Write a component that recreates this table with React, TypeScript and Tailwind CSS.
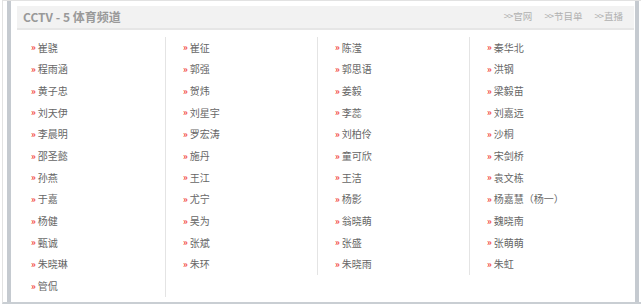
const columns: string[][] = [
  ['崔骁', '程雨涵', '黄子忠', '刘天伊', '李晨明', '邵圣懿', '孙燕', '于嘉', '杨健', '甄诚', '朱晓琳', '管侃'],
  ['崔征', '郭强', '贺炜', '刘星宇', '罗宏涛', '施丹', '王江', '尤宁', '吴为', '张斌', '朱环'],
  ['陈滢', '郭思语', '姜毅', '李蕊', '刘柏伶', '童可欣', '王洁', '杨影', '翁晓萌', '张盛', '朱晓雨'],
  ['秦华北', '洪钢', '梁毅苗', '刘嘉远', '沙桐', '宋剑桥', '袁文栋', '杨嘉慧（杨一）', '魏晓南', '张萌萌', '朱虹'],
];

const links = ['官网', '节目单', '直播'];

const font = { fontFamily: '"Noto Sans CJK SC", "Noto Sans", sans-serif' };

export default function App() {
  return (
    <div className="w-[641px] h-[305px] bg-white pl-[2px] pb-[1px]" style={font}>
      <div className="h-full flex border-l border-t border-[#e2e2e2] border-b-2 border-b-[#c9ced3] pl-[4px] pr-[2px]">
        <div className="flex-1 flex flex-col border-l-4 border-r-4 border-[#c5cad0] bg-white">
          <div className="mt-[5px] ml-[6px] mr-[1px] h-[24px] flex items-center justify-between bg-[#f2f2f2] border-b-2 border-[#e6e6e6] pl-[6px] pr-[11px]">
            <span className="text-[12px] font-bold text-[#999] leading-none">CCTV - 5 体育频道</span>
            <div className="flex items-center gap-[12px] text-[9.5px] text-[#b0b0b0] leading-none">
              {links.map((l) => (
                <a key={l} className="cursor-pointer">
                  <span className="tracking-[-1px] mr-[1px]">&gt;&gt;</span>
                  {l}
                </a>
              ))}
            </div>
          </div>

          <div className="flex items-start mt-[7px] pl-[3px]">
            {columns.map((col, i) => (
              <ul
                key={i}
                className={`w-[152px] pl-[17px] ${i < 3 ? 'border-r border-[#e4e4e4]' : ''}`}
              >
                {col.map((name) => (
                  <li key={name} className="h-[21.67px] flex items-center text-[10px] text-[#666]">
                    <span className="text-[#f2463c] text-[9px] font-bold mr-[2px] leading-none">»</span>
                    <span className="leading-none">{name}</span>
                  </li>
                ))}
              </ul>
            ))}
          </div>
        </div>
      </div>
    </div>
  );
}
